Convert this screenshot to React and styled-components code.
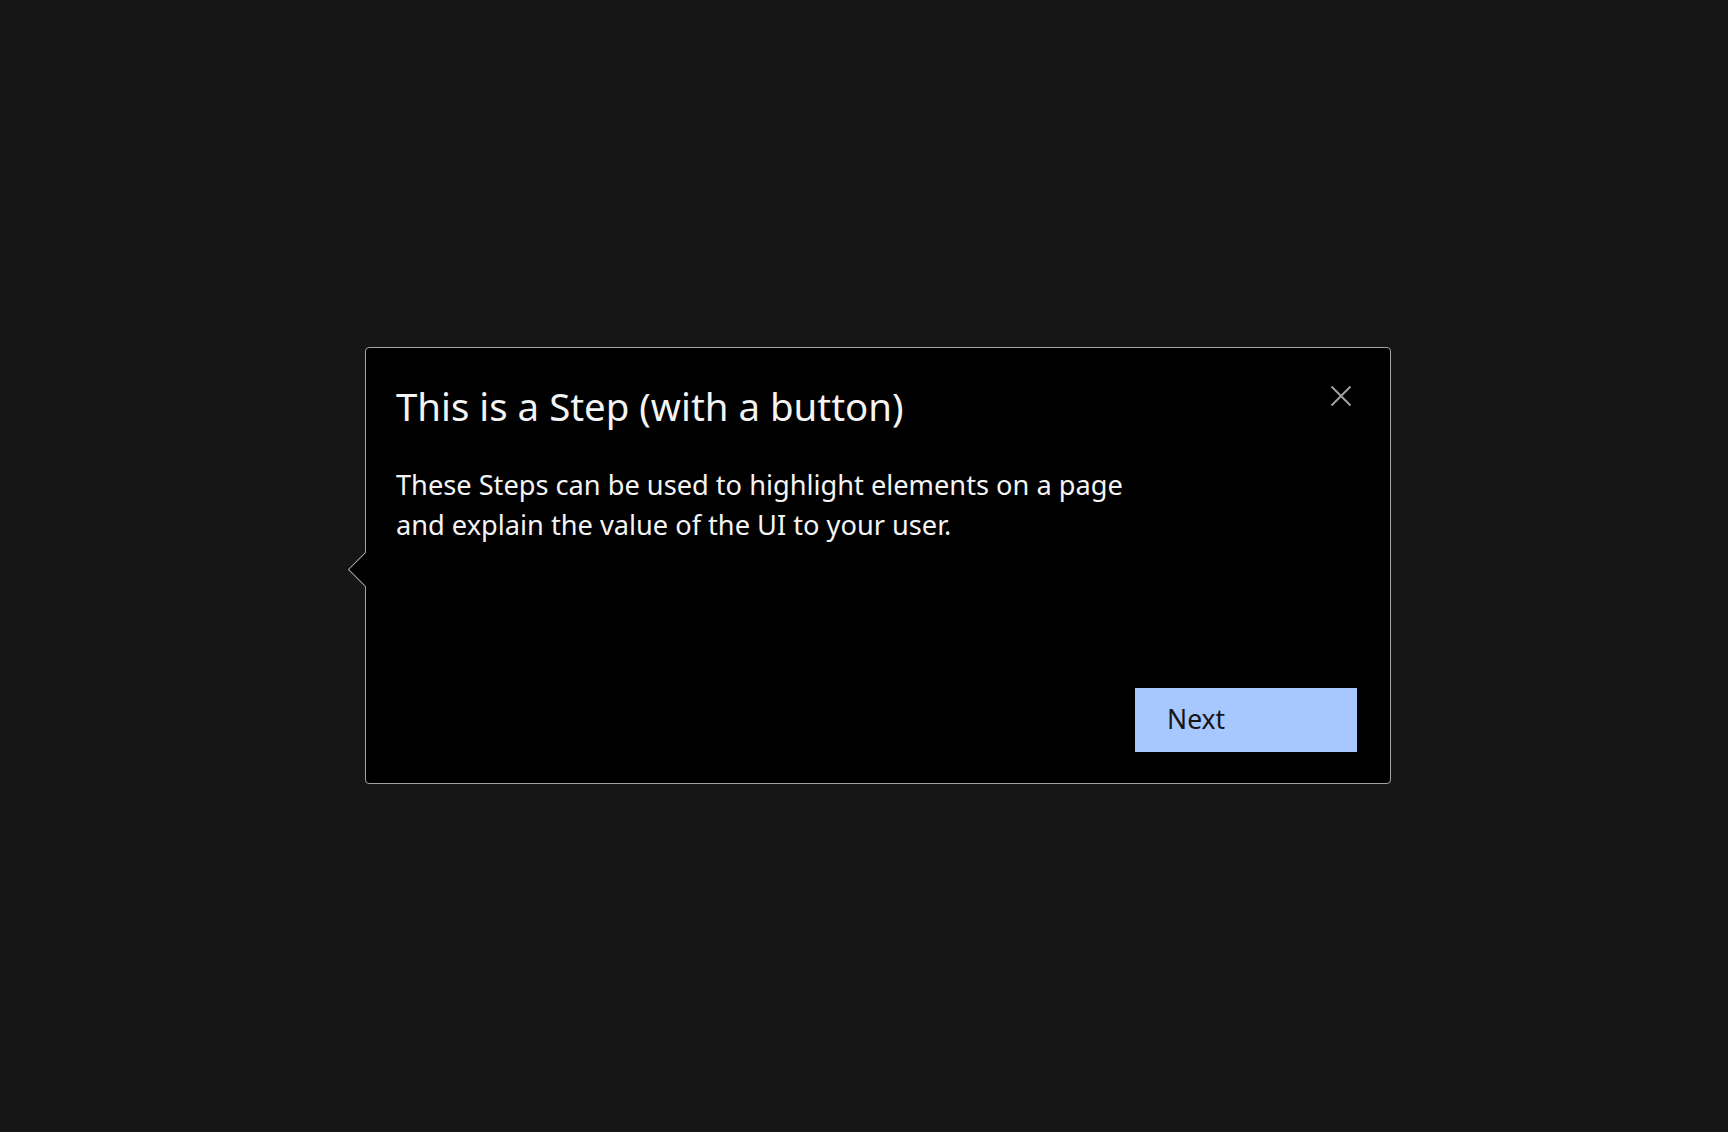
import React from 'react'
import styled, { createGlobalStyle } from 'styled-components'

const GlobalStyle = createGlobalStyle`
  html, body {
    margin: 0;
    padding: 0;
    background: #161616;
  }
  body {
    font-family: "Noto Sans", "Open Sans", sans-serif;
    -webkit-font-smoothing: antialiased;
  }
`

const Page = styled.main`
  min-height: 1132px;
  box-sizing: border-box;
  padding: 347px 0 0 365px;
  background: #161616;
`

const Step = styled.section`
  position: relative;
  box-sizing: border-box;
  width: 1026px;
  min-height: 437px;
  display: flex;
  flex-direction: column;
  padding: 30px 33px 31px 30px;
  background: #000;
  border: 1px solid #a2a2a2;
  border-radius: 4px;
  color: #f4f4f4;

  &::before {
    content: '';
    position: absolute;
    left: -13px;
    top: 209px;
    width: 24px;
    height: 24px;
    background: #000;
    border-left: 1px solid #a2a2a2;
    border-bottom: 1px solid #a2a2a2;
    transform: rotate(45deg);
  }
`

const Header = styled.header`
  display: flex;
  justify-content: space-between;
  align-items: flex-start;
`

const Title = styled.h2`
  margin: 0;
  font-size: 38.4px;
  line-height: 56px;
  font-weight: 400;
`

const Close = styled.button`
  display: flex;
  align-items: center;
  justify-content: center;
  width: 40px;
  height: 40px;
  margin: -2px -4px 0 0;
  padding: 0;
  border: none;
  background: transparent;
  cursor: pointer;
`

const Body = styled.p`
  margin: 31px 0 0;
  max-width: 770px;
  font-size: 27.2px;
  line-height: 40px;
  font-weight: 400;
`

const Footer = styled.footer`
  margin-top: auto;
  display: flex;
  justify-content: flex-end;
`

const NextButton = styled.button`
  box-sizing: border-box;
  width: 222px;
  height: 64px;
  padding: 0 0 2px 32px;
  border: none;
  background: #a6c8ff;
  color: #161616;
  font-family: inherit;
  font-size: 26.5px;
  text-align: left;
  cursor: pointer;
`

const CloseIcon = () => (
  <svg width="22" height="22" viewBox="0 0 22 22" fill="none">
    <path d="M1.5 1.5 L20.5 20.5 M20.5 1.5 L1.5 20.5" stroke="#a0a0a0" strokeWidth="2" />
  </svg>
)

const App = () => {
  return (
    <Page>
      <GlobalStyle />
      <Step>
        <Header>
          <Title>This is a Step (with a button)</Title>
          <Close aria-label='Close'>
            <CloseIcon />
          </Close>
        </Header>
        <Body>
          These Steps can be used to highlight elements on a page and explain
          the value of the UI to your user.
        </Body>
        <Footer>
          <NextButton>Next</NextButton>
        </Footer>
      </Step>
    </Page>
  )
}

export default App
